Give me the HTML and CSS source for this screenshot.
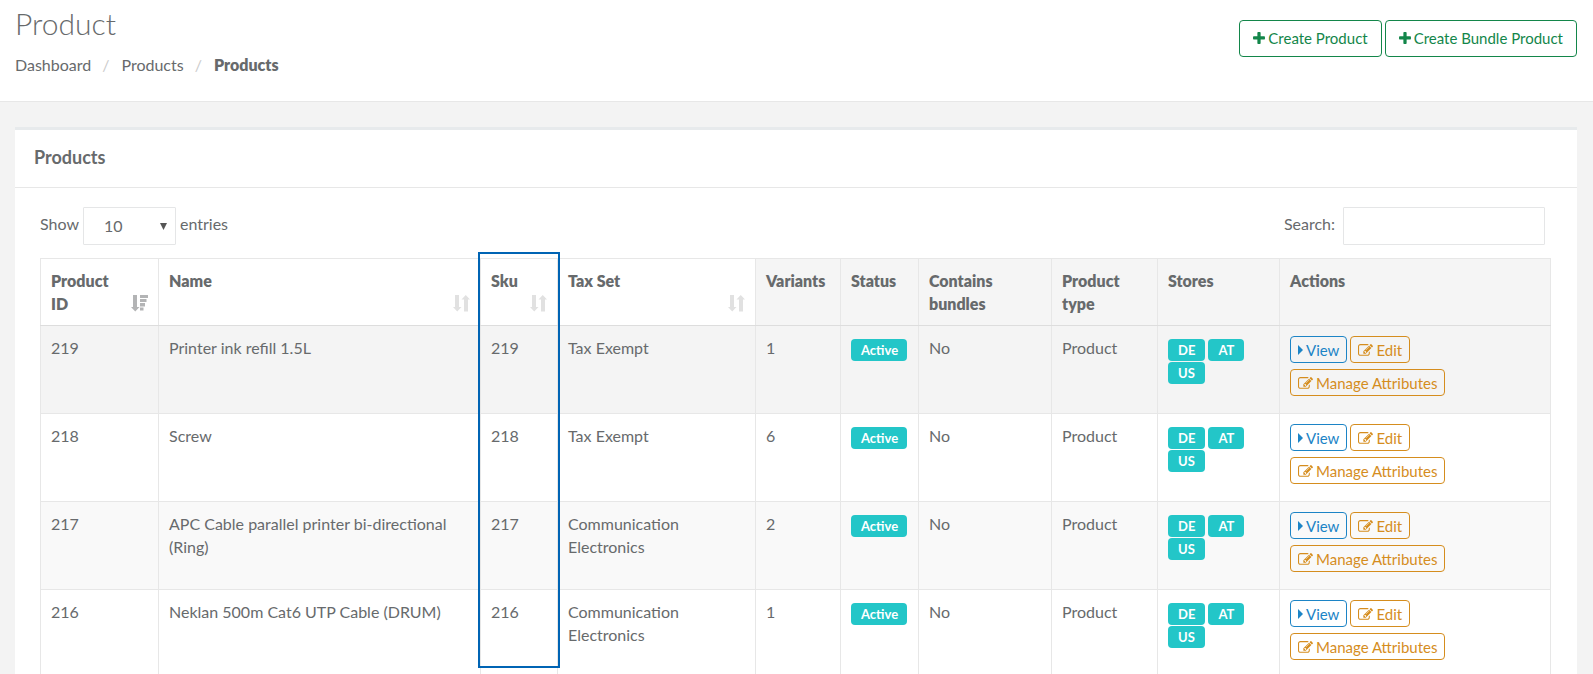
FILE: index.html
```html
<!DOCTYPE html>
<html lang="en">
<head>
<meta charset="utf-8">
<title>Product</title>
<link rel="stylesheet" href="styles.css">
</head>
<body>
<svg class="sprite" aria-hidden="true">
  <symbol id="plus" viewBox="192 128 1408 1536"><path d="M1600 736v192q0 40-28 68t-68 28h-416v416q0 40-28 68t-68 28h-192q-40 0-68-28t-28-68v-416h-416q-40 0-68-28t-28-68v-192q0-40 28-68t68-28h416v-416q0-40 28-68t68-28h192q40 0 68 28t28 68v416h416q40 0 68 28t28 68z"/></symbol>
  <symbol id="edit" viewBox="0 128 1792 1536"><path d="M888 1184l116-116-152-152-116 116v56h96v96h56zm440-720q-16-16-33 1l-350 350q-17 17-1 33t33-1l350-350q17-17 1-33zm80 594v190q0 119-84.5 203.5t-203.5 84.5h-832q-119 0-203.5-84.5t-84.5-203.5v-832q0-119 84.5-203.5t203.5-84.5h832q63 0 117 25 15 7 18 23 3 17-9 29l-49 49q-14 14-32 8-23-6-45-6h-832q-66 0-113 47t-47 113v832q0 66 47 113t113 47h832q66 0 113-47t47-113v-126q0-13 9-22l64-64q15-15 35-7t20 29zm-96-738l288 288-672 672h-288v-288zm444 132l-92 92-288-288 92-92q28-28 68-28t68 28l152 152q28 28 28 68t-28 68z"/></symbol>
  <symbol id="caret" viewBox="0 0 5 10"><path d="M0 0l5 5-5 5z"/></symbol>
  <symbol id="down" viewBox="0 0 7 7"><path d="M0 0h7L3.500 7z"/></symbol>
  <symbol id="sort" viewBox="0 0 17 18"><path d="M2 1h4v12h2.500l-4.250 4.500L0 13h2zM11 17.500v-12H8.500L12.750 1 17 5.500h-2v12z"/></symbol>
  <symbol id="sort-desc" viewBox="0 0 17 18"><path d="M2 1h4v12h2.500l-4.250 4.500L0 13h2zM9 1h8v3H9zM9 5h6.500v3H9zM9 9h5v3.500H9zM9 13.500h3.500v3H9z"/></symbol>
</svg>

<header class="page-head">
  <div>
    <h1>Product</h1>
    <nav aria-label="Breadcrumb">
      <ol class="crumbs">
        <li><a href="#">Dashboard</a></li>
        <li><a href="#">Products</a></li>
        <li><strong>Products</strong></li>
      </ol>
    </nav>
  </div>
  <div class="head-actions">
    <a class="btn create" href="#"><svg class="i-plus"><use href="#plus"/></svg>Create Product</a>
    <a class="btn create" href="#"><svg class="i-plus"><use href="#plus"/></svg>Create Bundle Product</a>
  </div>
</header>

<main class="content">
  <section class="card">
    <h2>Products</h2>
    <div class="card-body">
      <div class="tools">
        <label class="length">Show
          <span class="select"><select><option>10</option><option>25</option><option>50</option></select><svg><use href="#down"/></svg></span>
          entries</label>
        <label class="search">Search: <input type="search"></label>
      </div>
      <table>
        <colgroup>
          <col class="c-id"><col><col class="c-sku"><col class="c-tax"><col class="c-variants">
          <col class="c-status"><col class="c-bundles"><col class="c-type"><col class="c-stores"><col class="c-actions">
        </colgroup>
        <thead>
          <tr>
            <th class="sortable sorted">Product ID<svg><use href="#sort-desc"/></svg></th>
            <th class="sortable">Name<svg><use href="#sort"/></svg></th>
            <th class="sortable marked">Sku<svg><use href="#sort"/></svg><span class="highlight"></span></th>
            <th class="sortable">Tax Set<svg><use href="#sort"/></svg></th>
            <th>Variants</th>
            <th>Status</th>
            <th>Contains bundles</th>
            <th>Product type</th>
            <th>Stores</th>
            <th>Actions</th>
          </tr>
        </thead>
        <tbody>
          <tr class="hovered">
            <td>219</td><td>Printer ink refill 1.5L</td><td>219</td><td>Tax Exempt</td><td>1</td>
            <td><span class="badge">Active</span></td><td>No</td><td>Product</td>
            <td><div class="stores"><span class="badge">DE</span><span class="badge">AT</span><span class="badge">US</span></div></td>
            <td><div class="actions"><a class="btn view" href="#"><svg class="i-caret"><use href="#caret"/></svg>View</a><a class="btn edit" href="#"><svg class="i-edit"><use href="#edit"/></svg>Edit</a><a class="btn edit" href="#"><svg class="i-edit"><use href="#edit"/></svg>Manage Attributes</a></div></td>
          </tr>
          <tr>
            <td>218</td><td>Screw</td><td>218</td><td>Tax Exempt</td><td>6</td>
            <td><span class="badge">Active</span></td><td>No</td><td>Product</td>
            <td><div class="stores"><span class="badge">DE</span><span class="badge">AT</span><span class="badge">US</span></div></td>
            <td><div class="actions"><a class="btn view" href="#"><svg class="i-caret"><use href="#caret"/></svg>View</a><a class="btn edit" href="#"><svg class="i-edit"><use href="#edit"/></svg>Edit</a><a class="btn edit" href="#"><svg class="i-edit"><use href="#edit"/></svg>Manage Attributes</a></div></td>
          </tr>
          <tr>
            <td>217</td><td>APC Cable parallel printer bi-directional (Ring)</td><td>217</td><td>Communication Electronics</td><td>2</td>
            <td><span class="badge">Active</span></td><td>No</td><td>Product</td>
            <td><div class="stores"><span class="badge">DE</span><span class="badge">AT</span><span class="badge">US</span></div></td>
            <td><div class="actions"><a class="btn view" href="#"><svg class="i-caret"><use href="#caret"/></svg>View</a><a class="btn edit" href="#"><svg class="i-edit"><use href="#edit"/></svg>Edit</a><a class="btn edit" href="#"><svg class="i-edit"><use href="#edit"/></svg>Manage Attributes</a></div></td>
          </tr>
          <tr>
            <td>216</td><td>Neklan 500m Cat6 UTP Cable (DRUM)</td><td>216</td><td>Communication Electronics</td><td>1</td>
            <td><span class="badge">Active</span></td><td>No</td><td>Product</td>
            <td><div class="stores"><span class="badge">DE</span><span class="badge">AT</span><span class="badge">US</span></div></td>
            <td><div class="actions"><a class="btn view" href="#"><svg class="i-caret"><use href="#caret"/></svg>View</a><a class="btn edit" href="#"><svg class="i-edit"><use href="#edit"/></svg>Edit</a><a class="btn edit" href="#"><svg class="i-edit"><use href="#edit"/></svg>Manage Attributes</a></div></td>
          </tr>
        </tbody>
      </table>
    </div>
  </section>
</main>
</body>
</html>
```

FILE: styles.css
```css
* { box-sizing: border-box; }
body {
  margin: 0;
  height: 100vh;
  overflow: hidden;
  background: #f3f3f3;
  color: #676a6c;
  font: 16px/23px Lato, sans-serif;
}
a { color: inherit; text-decoration: none; }
svg { fill: currentColor; flex: none; }
.sprite { position: absolute; width: 0; height: 0; }

.page-head {
  display: flex;
  justify-content: space-between;
  align-items: flex-start;
  padding: 6px 16px 25px 15px;
  background: #fff;
  border-bottom: 1px solid #e7e7e7;
}
h1 { margin: 0 0 12px; font-size: 30px; line-height: 35px; font-weight: 300; }
strong { font-weight: 800; }
.crumbs { display: flex; margin: 0; padding: 0; list-style: none; }
.crumbs li + li::before { content: "/"; padding: 0 12px 0 11px; color: #ccc; }
.head-actions { display: flex; gap: 3px; padding-top: 14px; }

.btn {
  display: inline-flex;
  align-items: center;
  border: 1px solid;
  border-radius: 4px;
  font-size: 15px;
}
.create { height: 37px; padding: 0 13px; gap: 3px; color: #13864a; }
.i-plus { width: 12px; height: 13px; }

.content { padding: 25px 16px 0 15px; }
.card { background: #fff; border-top: 3px solid #e7eaec; }
h2 {
  margin: 0;
  padding: 16px 19px 18px;
  font-size: 18px;
  line-height: 23px;
  font-weight: 700;
  border-bottom: 1px solid #e7e7e7;
}
.card-body { padding: 19px 26px 30px 25px; }
.tools { display: flex; justify-content: space-between; padding-right: 6px; margin-bottom: 13px; }
.length, .search { display: flex; height: 38px; gap: 4px; line-height: 34px; }
.search { gap: 8px; }
select, input {
  height: 38px;
  border: 1px solid #e5e6e7;
  border-radius: 1px;
  background: #fff;
  color: inherit;
  font: inherit;
}
.select { position: relative; }
.select svg { position: absolute; right: 9px; top: 16px; width: 7px; height: 7px; color: #555; pointer-events: none; }
select { appearance: none; width: 93px; padding: 0 20px; }
input { width: 202px; padding: 6px 12px; }

table { width: 100%; table-layout: fixed; border-collapse: collapse; }
.c-id { width: 118px; }
.c-sku { width: 77px; }
.c-tax { width: 198px; }
.c-variants { width: 85px; }
.c-status { width: 78px; }
.c-bundles { width: 133px; }
.c-type { width: 106px; }
.c-stores { width: 122px; }
.c-actions { width: 271px; }
th, td { padding: 10px; text-align: left; vertical-align: top; border: 1px solid #e7e7e7; }
th { background: #f5f5f5; border-bottom-color: #ddd; font-weight: 800; }
th.sortable { position: relative; padding-right: 30px; background: #fff; }
th.marked { z-index: 1; }
th svg { position: absolute; right: 10px; bottom: 13px; width: 17px; height: 18px; color: #e1e1e1; }
th.sorted svg { color: #b3b4b5; }
tbody tr:nth-child(odd) { background: #f9f9f9; }
tbody tr.hovered { background: #f4f4f4; }
.highlight {
  position: absolute;
  top: -7px;
  left: -3px;
  right: -3px;
  height: 416px;
  border: 2px solid #0064b4;
  pointer-events: none;
}

.badge {
  display: inline-block;
  padding: 0 10px;
  border-radius: 4px;
  background: #23c6c8;
  color: #fff;
  font-size: 13px;
  line-height: 22px;
  font-weight: 700;
}
td > .badge { display: block; width: 56px; margin-top: 3px; }
.stores { display: flex; flex-wrap: wrap; gap: 1px 3px; width: 80px; padding-top: 3px; }
.actions { display: flex; flex-wrap: wrap; gap: 6px 3px; width: 200px; padding-bottom: 7px; }
.actions .btn { height: 27px; padding: 1px 7px 0; gap: 3px; }
.view { color: #1c84c6; }
.edit { color: #d58d1e; }
.i-caret { width: 5px; height: 10px; }
.i-edit { width: 15px; height: 13px; }
```
